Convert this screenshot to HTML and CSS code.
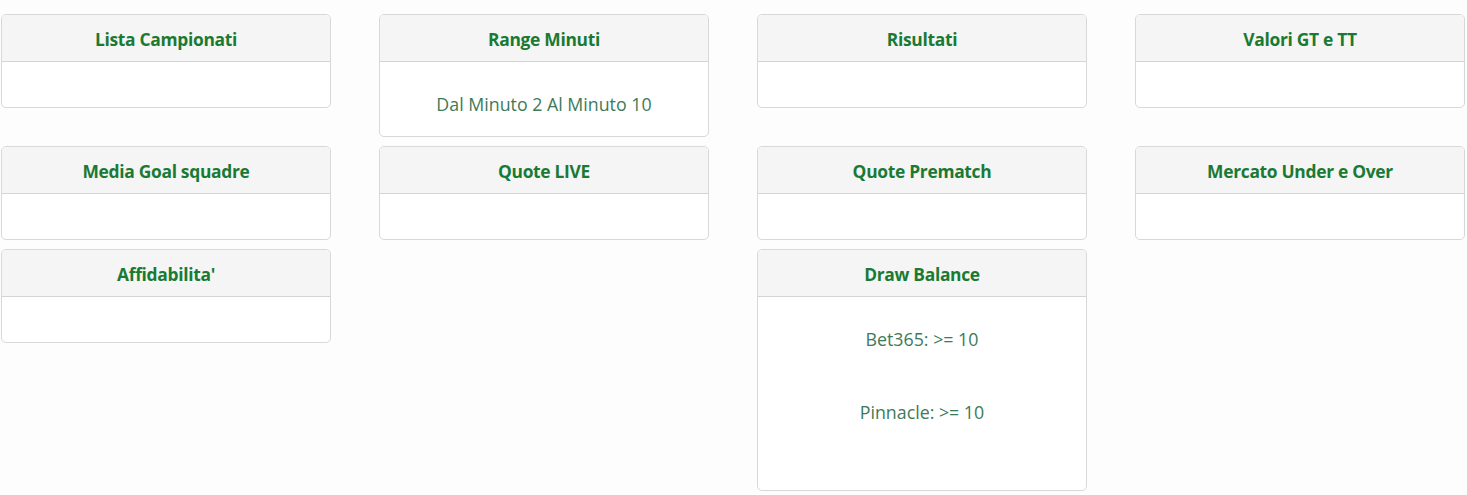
FILE: index.html
```html
<!DOCTYPE html>
<html lang="it">
<head>
<meta charset="utf-8">
<title>Filtri</title>
<link rel="stylesheet" href="styles.css">
</head>
<body>
<div class="grid">
  <div class="card"><div class="card-header">Lista Campionati</div><div class="card-body"></div></div>
  <div class="card"><div class="card-header">Range Minuti</div><div class="card-body"><div class="item">Dal Minuto 2 Al Minuto 10</div></div></div>
  <div class="card"><div class="card-header">Risultati</div><div class="card-body"></div></div>
  <div class="card"><div class="card-header">Valori GT e TT</div><div class="card-body"></div></div>

  <div class="card"><div class="card-header">Media Goal squadre</div><div class="card-body"></div></div>
  <div class="card"><div class="card-header">Quote LIVE</div><div class="card-body"></div></div>
  <div class="card"><div class="card-header">Quote Prematch</div><div class="card-body"></div></div>
  <div class="card"><div class="card-header">Mercato Under e Over</div><div class="card-body"></div></div>

  <div class="card"><div class="card-header">Affidabilita'</div><div class="card-body"></div></div>
  <div class="empty"></div>
  <div class="card"><div class="card-header">Draw Balance</div><div class="card-body card-body-list"><div class="item">Bet365: &gt;= 10</div><div class="item">Pinnacle: &gt;= 10</div></div></div>
  <div class="empty"></div>
</div>
</body>
</html>
```

FILE: styles.css
```css
html, body {
  margin: 0;
  padding: 0;
  background: #fdfdfd;
}
body {
  font-family: "Open Sans", "Noto Sans", "Liberation Sans", sans-serif;
  font-size: 17px;
}
.grid {
  display: grid;
  grid-template-columns: repeat(4, 330px);
  column-gap: 48px;
  row-gap: 9px;
  align-items: start;
  padding: 14px 0 0 1px;
}
.card {
  background: #fff;
  border: 1px solid #d8d8d8;
  border-radius: 5px;
  overflow: hidden;
}
.card-header {
  background: #f5f5f5;
  border-bottom: 1px solid #d4d4d4;
  color: #1a7a33;
  font-weight: 700;
  font-size: 17.4px;
  text-align: center;
  height: 46px;
  line-height: 49px;
  letter-spacing: -0.3px;
}
.card-body {
  box-sizing: border-box;
  min-height: 45px;
  padding: 20px;
  text-align: center;
  display: flex;
  flex-direction: column;
  align-items: center;
}
.item {
  color: #3d7a5a;
  line-height: 24px;
  margin-top: 10px;
  font-size: 17.8px;
  letter-spacing: 0;
}
.card-body-list .item + .item {
  margin-top: 49px;
}
.card-body-list .item:last-child {
  margin-bottom: 46px;
}
```
